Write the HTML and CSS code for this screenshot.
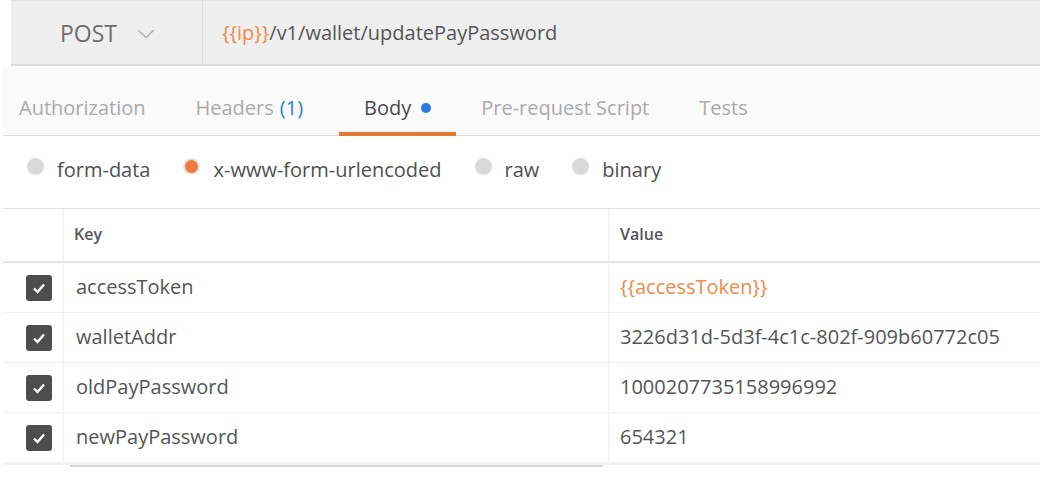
FILE: index.html
```html
<!DOCTYPE html>
<html>
<head>
<meta charset="utf-8">
<link rel="stylesheet" href="styles.css">
</head>
<body>
<div class="page">
  <div class="urlbar">
    <div class="method">
      <span class="method-name">POST</span>
      <svg class="chev" width="18" height="10" viewBox="0 0 18 10"><path d="M1 1 L9 8.5 L17 1" fill="none" stroke="#b3b3b3" stroke-width="1.6"/></svg>
    </div>
    <div class="url"><span class="var">{{ip}}</span>/v1/wallet/updatePayPassword</div>
  </div>

  <div class="tabs">
    <div class="tab">Authorization</div>
    <div class="tab headers">Headers <span class="count">(1)</span></div>
    <div class="tab active">Body <span class="dot"></span></div>
    <div class="tab">Pre-request Script</div>
    <div class="tab">Tests</div>
  </div>

  <div class="bodytypes">
    <label class="opt"><span class="radio"></span>form-data</label>
    <label class="opt"><span class="radio on"></span>x-www-form-urlencoded</label>
    <label class="opt"><span class="radio"></span>raw</label>
    <label class="opt"><span class="radio"></span>binary</label>
  </div>

  <div class="kv">
    <div class="row head">
      <div class="cell chk"></div>
      <div class="cell key">Key</div>
      <div class="cell val">Value</div>
    </div>
    <div class="row">
      <div class="cell chk"><span class="box"><svg width="14" height="12" viewBox="0 0 14 12"><path d="M2 6.5 L5.5 10 L12 2.5" fill="none" stroke="#fff" stroke-width="2.4"/></svg></span></div>
      <div class="cell key">accessToken</div>
      <div class="cell val var">{{accessToken}}</div>
    </div>
    <div class="row">
      <div class="cell chk"><span class="box"><svg width="14" height="12" viewBox="0 0 14 12"><path d="M2 6.5 L5.5 10 L12 2.5" fill="none" stroke="#fff" stroke-width="2.4"/></svg></span></div>
      <div class="cell key">walletAddr</div>
      <div class="cell val">3226d31d-5d3f-4c1c-802f-909b60772c05</div>
    </div>
    <div class="row">
      <div class="cell chk"><span class="box"><svg width="14" height="12" viewBox="0 0 14 12"><path d="M2 6.5 L5.5 10 L12 2.5" fill="none" stroke="#fff" stroke-width="2.4"/></svg></span></div>
      <div class="cell key">oldPayPassword</div>
      <div class="cell val">1000207735158996992</div>
    </div>
    <div class="row last">
      <div class="cell chk"><span class="box"><svg width="14" height="12" viewBox="0 0 14 12"><path d="M2 6.5 L5.5 10 L12 2.5" fill="none" stroke="#fff" stroke-width="2.4"/></svg></span></div>
      <div class="cell key">newPayPassword</div>
      <div class="cell val">654321</div>
    </div>
  </div>
  <div class="scrollbar"></div>
</div>
</body>
</html>
```

FILE: styles.css
```css
html, body {
  margin: 0;
  padding: 0;
  background: #fff;
}
body {
  font-family: "Open Sans", "DejaVu Sans", sans-serif;
  color: #505050;
}
.page {
  margin-left: 3px;
  width: 1037px;
}
.urlbar {
  margin-left: 8px;
  height: 63px;
  background: #efefef;
  border-top: 1px solid #e4e4e4;
  border-bottom: 2px solid #dcdcdc;
  display: flex;
  align-items: stretch;
}
.method {
  width: 192px;
  border-right: 1px solid #dedede;
  display: flex;
  align-items: center;
  padding-left: 49px;
  box-sizing: border-box;
}
.method-name {
  font-size: 23px;
  color: #6e6e6e;
}
.chev {
  margin-left: 20px;
  margin-top: 2px;
}
.url {
  display: flex;
  align-items: center;
  padding-left: 19px;
  font-size: 20px;
  color: #555;
}
.var {
  color: #ef8a4c;
}
.tabs {
  height: 69px;
  background: #fafafa;
  border-bottom: 1px solid #dcdcdc;
  display: flex;
  align-items: stretch;
  padding-left: 16px;
}
.tab {
  position: relative;
  display: flex;
  align-items: center;
  padding: 14px 25px 0;
  font-size: 20px;
  color: #aaa;
}
.tab:first-child {
  padding-left: 0;
}
.tab.headers {
  padding-right: 36px;
}
.tab .count {
  color: #2f7fd3;
  margin-left: 6px;
}
.tab.active {
  color: #4a4a4a;
}
.tab.active::after {
  content: "";
  position: absolute;
  left: 0;
  right: 0;
  bottom: -1px;
  height: 4px;
  background: #e4793a;
}
.dot {
  display: inline-block;
  width: 10px;
  height: 10px;
  border-radius: 50%;
  background: #2a7ae2;
  margin-left: 10px;
}
.bodytypes {
  height: 72px;
  padding-bottom: 6px;
  box-sizing: border-box;
  display: flex;
  align-items: center;
  padding-left: 24px;
}
.opt {
  display: flex;
  align-items: center;
  font-size: 20px;
  color: #505050;
  margin-right: 33px;
}
.radio {
  width: 17px;
  height: 17px;
  border-radius: 50%;
  background: #d9d9d9;
  margin-right: 13px;
  box-sizing: border-box;
  margin-top: -5px;
}
.radio.on {
  background: #ef7c3e;
  border: 2px solid #e2e2e2;
}
.kv {
  border-top: 1px solid #e2e2e2;
}
.row {
  display: grid;
  grid-template-columns: 59px 546px 1fr;
  height: 49px;
  border-bottom: 1px solid #f1f1f1;
}
.row.head {
  height: 52px;
  border-bottom: 2px solid #e4e4e4;
}
.row.last {
  border-bottom: 3px solid #f1f1f1;
}
.cell {
  display: flex;
  align-items: center;
}
.cell.key, .cell.val {
  border-left: 2px solid #f4f4f4;
  font-size: 20px;
  color: #555;
  padding-left: 10px;
  padding-bottom: 2px;
}
.cell.key {
  padding-left: 12px;
}
.head .cell.key, .head .cell.val {
  font-size: 16px;
  font-weight: 600;
  color: #555;
}
.head .cell.key {
  padding-left: 10px;
}
.cell.val.var {
  color: #ef8a4c;
}
.cell.chk {
  padding-left: 23px;
}
.box {
  width: 26px;
  height: 26px;
  border-radius: 3px;
  background: #4d4d4d;
  display: flex;
  align-items: center;
  justify-content: center;
}
.scrollbar {
  margin-left: 67px;
  width: 533px;
  height: 2px;
  background: #d6d6d6;
}
```
